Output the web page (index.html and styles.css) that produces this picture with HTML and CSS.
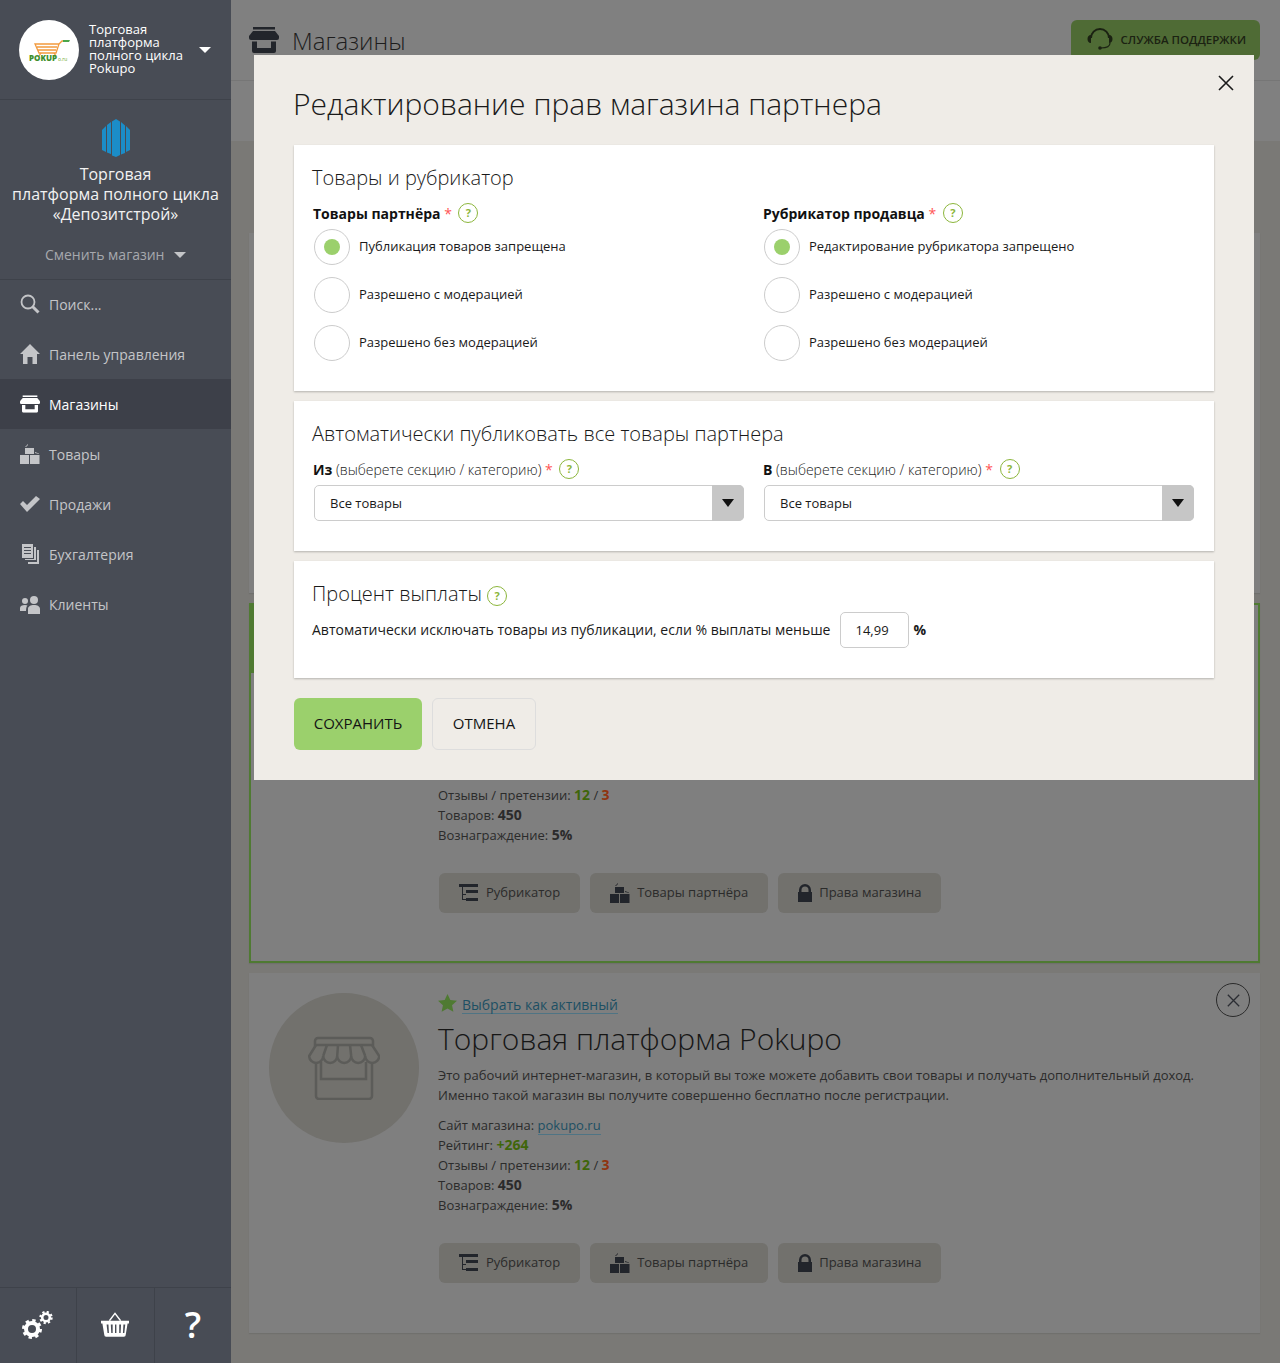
FILE: index.html
```html
<!DOCTYPE html>
<html lang="ru">
<head>
    <meta charset="UTF-8">
    <meta name="viewport" content="width=device-width, initial-scale=1.0">
    <title>Магазины</title>
    <link rel="stylesheet" href="styles.css">
</head>
<body>

<svg class="sprite" xmlns="http://www.w3.org/2000/svg">
    <symbol id="i-store" viewBox="0 0 30 26">
        <path d="M4 0h22v2.500H4z"/>
        <path d="M4 4h22l4 5v2a2 2 0 0 1-2 2H2a2 2 0 0 1-2-2V9z"/>
        <path fill-rule="evenodd" d="M3 14.500h24V24a2 2 0 0 1-2 2H5a2 2 0 0 1-2-2zM8 14.500V21h14v-6.500z"/>
    </symbol>
    <symbol id="i-boxes" viewBox="0 0 20 20">
        <path d="M0 11h9v9H0zM10 11h9.500v9H10zM5 4h9v6H5z"/>
        <path d="M5 3l3-3v1L6 3zM15 8l4 1.500V10l-4-1z"/>
    </symbol>
    <symbol id="i-list" viewBox="0 0 20 18">
        <path d="M0 0h19v3H0zM7 6h12v3H7zM7 14h12v3H7z"/>
        <path d="M3 3h1v12h3v1H3z"/>
        <path d="M4 10h3v1H4z"/>
    </symbol>
    <symbol id="i-lock" viewBox="0 0 14 18">
        <path fill-rule="evenodd" d="M1 8V6a6 6 0 0 1 12 0v2h1v10H0V8zm2.500 0h7V6a3.500 3.500 0 0 0-7 0z"/>
    </symbol>
    <symbol id="i-star" viewBox="0 0 20 19">
        <path d="M10 0l3 6.400 7 .8-5.200 4.700 1.400 6.900L10 15.400l-6.200 3.400 1.400-6.900L0 7.200l7-.8z"/>
    </symbol>
    <symbol id="i-close" viewBox="0 0 16 16">
        <path d="M1 1l14 14M15 1L1 15" fill="none" stroke="currentColor" stroke-width="1.600"/>
    </symbol>
    <symbol id="i-bigstore" viewBox="0 0 72 64">
        <g fill="none" stroke="#5c5c59" stroke-width="2.500">
            <path d="M7 9V5a3 3 0 0 1 3-3h52a3 3 0 0 1 3 3v4z"/>
            <path d="M8 9L1.200 20a7 7 0 0 0 14 0a7 7 0 0 0 14 0a7 7 0 0 0 14 0a7 7 0 0 0 14 0a7 7 0 0 0 14 0L64 9"/>
            <path d="M15.200 20L19 9M29.200 20L30 9M43.200 20L42 9M57.200 20L53 9"/>
            <path d="M8 27v33a3 3 0 0 0 3 3h50a3 3 0 0 0 3-3V27"/>
            <path d="M13 26v17h45V26"/>
        </g>
    </symbol>
</svg>

<div class="page">

    <aside class="sidebar">
        <div class="account">
            <div class="account-logo">
                <svg width="42" height="26" viewBox="0 0 42 26">
                    <g fill="none" stroke="#f29a3e" stroke-width="1.300">
                        <path d="M7 7h24l-3 9H11zM9 10h20M10 13h18M31 7l3-3h2"/>
                        <path d="M13 16l-2 3M26 16l2 3"/>
                    </g>
                    <path d="M35 3h7l-1 2h-6z" fill="#4ba64a"/>
                    <text x="1" y="24" class="logo-word">POKUP</text>
                    <text x="30" y="24" class="logo-tail">o.ru</text>
                </svg>
            </div>
            <div class="account-name">Торговая платформа полного цикла Pokupo</div>
            <span class="caret caret-white"></span>
        </div>

        <div class="shop">
            <svg class="shop-logo" width="28" height="38" viewBox="0 0 28 38">
                <path fill="#1b8dc8" d="M0 11l4-4v26l-4-2zM5 6l4-3v32l-4-1.500zM10 2.500L14 0l4 2.500V36l-4 2-4-1.500zM19 3l4 3.500V34l-4 1.500zM24 7l4 4v20l-4 2z"/>
            </svg>
            <div class="shop-name">Торговая<br>платформа полного цикла<br>«Депозитстрой»</div>
            <div class="shop-switch">Сменить магазин <span class="caret caret-grey"></span></div>
        </div>

        <nav class="nav">
            <a class="nav-item">
                <svg class="nav-icon" viewBox="0 0 20 20"><circle cx="8" cy="8" r="6.500" fill="none" stroke="currentColor" stroke-width="1.800"/><path d="M12.500 12.500l6 6" stroke="currentColor" stroke-width="3"/></svg>
                Поиск...
            </a>
            <a class="nav-item">
                <svg class="nav-icon" viewBox="0 0 20 20"><path d="M10 0l10 10h-3v10h-4.500v-7h-5v7H3V10H0z"/></svg>
                Панель управления
            </a>
            <a class="nav-item nav-item-active">
                <svg class="nav-icon" viewBox="0 0 30 26"><use href="#i-store"/></svg>
                Магазины
            </a>
            <a class="nav-item">
                <svg class="nav-icon" viewBox="0 0 20 20"><use href="#i-boxes"/></svg>
                Товары
            </a>
            <a class="nav-item">
                <svg class="nav-icon" viewBox="0 0 20 20"><path d="M0 10l3-3 4 4 9-9 4 3-13 13z"/></svg>
                Продажи
            </a>
            <a class="nav-item">
                <svg class="nav-icon" viewBox="0 0 20 20"><path fill-rule="evenodd" d="M2 0h11v14H2zM4 3v1h7V3zM4 6v1h7V6zM4 9v1h7V9z"/><path d="M14 3h2v13H5v-1h9zM17 6h2v14H8v-2h9z"/></svg>
                Бухгалтерия
            </a>
            <a class="nav-item">
                <svg class="nav-icon" viewBox="0 0 20 20"><circle cx="5" cy="7" r="3"/><circle cx="14" cy="6" r="4"/><path d="M0 17v-3c0-2 2-3 5-3 1 0 2 .2 2.500.5C6.500 12.500 6 14 6 17zM8 20v-5c0-2.500 2.500-4 6-4s6 1.500 6 4v5z"/></svg>
                Клиенты
            </a>
        </nav>

        <div class="side-tools">
            <div class="side-tool">
                <svg class="gears" width="32" height="28" viewBox="0 0 32 28">
                    <circle cx="10" cy="18" r="6" fill="none" stroke="#fff" stroke-width="4"/>
                    <circle cx="10" cy="18" r="8.500" fill="none" stroke="#fff" stroke-width="3" stroke-dasharray="3.300 3.370"/>
                    <circle cx="24" cy="6.500" r="3.800" fill="none" stroke="#fff" stroke-width="2.600"/>
                    <circle cx="24" cy="6.500" r="5.600" fill="none" stroke="#fff" stroke-width="2.200" stroke-dasharray="2.200 2.200"/>
                </svg>
            </div>
            <div class="side-tool">
                <svg width="28" height="25" viewBox="0 0 30 26">
                    <path d="M9 9l6-8 6 8" fill="none" stroke="#fff" stroke-width="1.500"/>
                    <path fill-rule="evenodd" d="M0 9h30v3h-1.500l-2 12a2 2 0 0 1-2 2h-19a2 2 0 0 1-2-2L1.500 12H0zM6 13l1 9h1.500l-.5-9zM10.500 13l.5 9h1.500v-9zM15 13v9h1.500v-9zM19.500 13v9H21l.5-9zM24 13l-.5 9H25l1-9z"/>
                </svg>
            </div>
            <div class="side-tool side-tool-help">?</div>
        </div>
    </aside>

    <main class="content">
        <header class="topbar">
            <svg class="topbar-icon" viewBox="0 0 30 26"><use href="#i-store"/></svg>
            <span class="topbar-title">Магазины</span>
            <a class="support">
                <svg width="26" height="22" viewBox="0 0 26 22">
                    <path d="M4 10a9 9 0 0 1 18 0" fill="none" stroke="currentColor" stroke-width="2"/>
                    <path d="M4 7v8C1.500 15 .5 13 .5 11S1.500 7 4 7zM22 7v8c2.500 0 3.500-2 3.500-4S24.500 7 22 7z"/>
                    <path d="M23 15c0 3-3 5-9 5" fill="none" stroke="currentColor" stroke-width="1.200"/>
                    <circle cx="13" cy="20" r="1.800"/>
                </svg>
                Служба поддержки
            </a>
        </header>
        <div class="topband"></div>

        <div class="cards">
            <section class="card"></section>

            <section class="card card-active">
                <div class="card-thumb">
                    <svg width="72" height="64" viewBox="0 0 72 64"><use href="#i-bigstore"/></svg>
                </div>
                <div class="card-body">
                    <div class="card-pick">
                        <svg class="card-star" viewBox="0 0 20 19"><use href="#i-star"/></svg>
                        <a class="link">Выбрать как активный</a>
                    </div>
                    <h3 class="card-title">Торговая платформа Pokupo</h3>
                    <p class="card-desc">Это рабочий интернет-магазин, в который вы тоже можете добавить свои товары и получать дополнительный доход.<br>Именно такой магазин вы получите совершенно бесплатно после регистрации.</p>
                    <ul class="card-facts">
                        <li>Сайт магазина: <a class="link">pokupo.ru</a></li>
                        <li>Рейтинг: <b class="good">+264</b></li>
                        <li>Отзывы / претензии: <b class="good">12</b> / <b class="bad">3</b></li>
                        <li>Товаров: <b>450</b></li>
                        <li>Вознаграждение: <b>5%</b></li>
                    </ul>
                    <div class="card-actions">
                        <a class="card-btn"><svg class="btn-icon" viewBox="0 0 20 18"><use href="#i-list"/></svg>Рубрикатор</a>
                        <a class="card-btn"><svg class="btn-icon" viewBox="0 0 20 20"><use href="#i-boxes"/></svg>Товары партнёра</a>
                        <a class="card-btn"><svg class="btn-icon btn-icon-lock" viewBox="0 0 14 18"><use href="#i-lock"/></svg>Права магазина</a>
                    </div>
                </div>
            </section>

            <section class="card">
                <div class="card-thumb">
                    <svg width="72" height="64" viewBox="0 0 72 64"><use href="#i-bigstore"/></svg>
                </div>
                <div class="card-body">
                    <div class="card-pick">
                        <svg class="card-star" viewBox="0 0 20 19"><use href="#i-star"/></svg>
                        <a class="link">Выбрать как активный</a>
                    </div>
                    <h3 class="card-title">Торговая платформа Pokupo</h3>
                    <p class="card-desc">Это рабочий интернет-магазин, в который вы тоже можете добавить свои товары и получать дополнительный доход.<br>Именно такой магазин вы получите совершенно бесплатно после регистрации.</p>
                    <ul class="card-facts">
                        <li>Сайт магазина: <a class="link">pokupo.ru</a></li>
                        <li>Рейтинг: <b class="good">+264</b></li>
                        <li>Отзывы / претензии: <b class="good">12</b> / <b class="bad">3</b></li>
                        <li>Товаров: <b>450</b></li>
                        <li>Вознаграждение: <b>5%</b></li>
                    </ul>
                    <div class="card-actions">
                        <a class="card-btn"><svg class="btn-icon" viewBox="0 0 20 18"><use href="#i-list"/></svg>Рубрикатор</a>
                        <a class="card-btn"><svg class="btn-icon" viewBox="0 0 20 20"><use href="#i-boxes"/></svg>Товары партнёра</a>
                        <a class="card-btn"><svg class="btn-icon btn-icon-lock" viewBox="0 0 14 18"><use href="#i-lock"/></svg>Права магазина</a>
                    </div>
                </div>
                <a class="card-remove"><svg viewBox="0 0 16 16"><use href="#i-close"/></svg></a>
            </section>
        </div>
    </main>

    <div class="modal">
        <a class="modal-close"><svg viewBox="0 0 16 16"><use href="#i-close"/></svg></a>
        <h1 class="modal-title">Редактирование прав магазина партнера</h1>

        <section class="panel">
            <h2 class="panel-title">Товары и рубрикатор</h2>
            <div class="two-cols">
                <div>
                    <div class="field-label"><b>Товары партнёра</b> <span class="req">*</span> <span class="help">?</span></div>
                    <div class="radios">
                        <label class="radio"><span class="radio-dot radio-dot-on"></span>Публикация товаров запрещена</label>
                        <label class="radio"><span class="radio-dot"></span>Разрешено с модерацией</label>
                        <label class="radio"><span class="radio-dot"></span>Разрешено без модерацией</label>
                    </div>
                </div>
                <div>
                    <div class="field-label"><b>Рубрикатор продавца</b> <span class="req">*</span> <span class="help">?</span></div>
                    <div class="radios">
                        <label class="radio"><span class="radio-dot radio-dot-on"></span>Редактирование рубрикатора запрещено</label>
                        <label class="radio"><span class="radio-dot"></span>Разрешено с модерацией</label>
                        <label class="radio"><span class="radio-dot"></span>Разрешено без модерацией</label>
                    </div>
                </div>
            </div>
        </section>

        <section class="panel">
            <h2 class="panel-title">Автоматически публиковать все товары партнера</h2>
            <div class="two-cols">
                <div>
                    <div class="field-label"><b>Из</b> (выберете секцию / категорию) <span class="req">*</span> <span class="help">?</span></div>
                    <div class="dropdown">Все товары<span class="dropdown-arrow"></span></div>
                </div>
                <div>
                    <div class="field-label"><b>В</b> (выберете секцию / категорию) <span class="req">*</span> <span class="help">?</span></div>
                    <div class="dropdown">Все товары<span class="dropdown-arrow"></span></div>
                </div>
            </div>
        </section>

        <section class="panel">
            <h2 class="panel-title">Процент выплаты <span class="help help-title">?</span></h2>
            <div class="percent-row">
                <span class="percent-text">Автоматически исключать товары из публикации, если % выплаты меньше</span>
                <div class="percent-input">14,99</div>
                <b class="percent-text">%</b>
            </div>
        </section>

        <div class="modal-actions">
            <button class="btn btn-save">Сохранить</button>
            <button class="btn btn-cancel">Отмена</button>
        </div>
    </div>

</div>

</body>
</html>
```

FILE: styles.css
```css
/* base */
* {
    box-sizing: border-box;
}

body {
    margin: 0;
    font-family: "Open Sans", "Liberation Sans", sans-serif;
    font-size: 13px;
    color: #2b2b2b;
    background-color: #7a7976;
}

a {
    text-decoration: none;
}

ul {
    list-style: none;
    margin: 0;
    padding: 0;
}

.sprite {
    position: absolute;
    width: 0;
    height: 0;
}

.page {
    position: relative;
    display: flex;
    width: 1280px;
    height: 1363px;
    overflow: hidden;
}

/* sidebar */
.sidebar {
    display: flex;
    flex-direction: column;
    flex: 0 0 231px;
    background-color: #484c55;
    color: #c4c5c8;
}

.account {
    display: flex;
    align-items: center;
    height: 100px;
    padding-left: 19px;
    border-bottom: 1px solid #3e424a;
}

.account-logo {
    display: flex;
    align-items: center;
    justify-content: center;
    width: 60px;
    height: 60px;
    border-radius: 50%;
    background-color: #fff;
}

.logo-word {
    font-size: 8px;
    font-weight: 800;
    fill: #3f8f2c;
}

.logo-tail {
    font-size: 5px;
    fill: #6eaa2e;
}

.account-name {
    width: 100px;
    margin-top: -1px;
    margin-left: 10px;
    font-size: 13px;
    line-height: 13px;
    color: #fff;
}

.caret {
    display: inline-block;
    border-left: 6px solid transparent;
    border-right: 6px solid transparent;
    border-top: 6px solid #fff;
}

.caret-white {
    margin-left: 10px;
}

.caret-grey {
    border-top-color: #c4c5c8;
    margin-left: 6px;
    vertical-align: 2px;
}

.shop {
    height: 180px;
    padding-top: 19px;
    text-align: center;
    border-bottom: 1px solid #3e424a;
}

.shop-logo {
    display: block;
    margin: 0 auto 7px;
}

.shop-name {
    font-size: 16px;
    line-height: 20px;
    color: #f2f2f2;
}

.shop-switch {
    margin-top: 20px;
    font-size: 14px;
    line-height: 22px;
    color: #a6a8ad;
}

.nav {
    flex: 1;
    margin-top: -1px;
}

.nav-item {
    display: flex;
    align-items: center;
    gap: 9px;
    height: 50px;
    padding-left: 20px;
    font-size: 14px;
    color: #c4c5c8;
}

.nav-item-active {
    background-color: #3d4049;
    color: #fff;
}

.nav-icon {
    flex: none;
    width: 20px;
    height: 20px;
    fill: currentColor;
}

.side-tools {
    display: flex;
    height: 76px;
    border-top: 1px solid #3e424a;
}

.side-tool {
    display: flex;
    align-items: center;
    justify-content: center;
    flex: 1;
    padding-bottom: 2px;
    fill: #fff;
    border-left: 1px solid #3e424a;
}

.side-tool:first-child {
    border-left: 0;
}

.gears {
    margin-top: 1px;
}

.side-tool-help {
    font-size: 36px;
    font-weight: 600;
    color: #fff;
}

/* page behind the dialog */
.content {
    flex: 1;
    min-width: 0;
}

.topbar {
    display: flex;
    align-items: center;
    height: 81px;
    padding: 0 20px 0 18px;
    background-color: #808080;
    border-bottom: 1px solid #767676;
}

.topbar-icon {
    width: 30px;
    height: 26px;
    fill: #22252b;
}

.topbar-title {
    margin-left: 13px;
    font-size: 24px;
    font-weight: 300;
    color: #1d1d1d;
}

.support {
    display: flex;
    align-items: center;
    gap: 8px;
    align-self: flex-start;
    height: 40px;
    margin: 20px 0 0 auto;
    padding: 0 14px 2px 16px;
    border-radius: 6px;
    background-color: #4f6b35;
    font-size: 11.500px;
    font-weight: 600;
    text-transform: uppercase;
    color: #1b2212;
    fill: #1b2212;
}

.topband {
    height: 60px;
    background-color: #808080;
}

.cards {
    display: flex;
    flex-direction: column;
    gap: 10px;
    padding: 92px 20px 0 18px;
}

.card {
    position: relative;
    display: flex;
    height: 360px;
    padding: 20px;
    background-color: #7f7f7f;
    box-shadow: 0 1px 1px #70706d;
}

.card-active {
    padding: 18px;
    border: 2px solid #4f7a32;
}

.card-active::before {
    content: "";
    position: absolute;
    left: 0;
    top: 0;
    width: 4px;
    height: 68px;
    background-color: #4f7a32;
}

.card-thumb {
    display: flex;
    align-items: center;
    justify-content: center;
    flex: none;
    width: 150px;
    height: 150px;
    border-radius: 50%;
    background-color: #72716d;
}

.card-body {
    margin-left: 19px;
}

.card-pick {
    display: flex;
    align-items: center;
    gap: 5px;
    height: 22px;
    margin-top: 1px;
    font-size: 14px;
}

.card-star {
    width: 19px;
    height: 18px;
    margin-top: -4px;
    fill: #4f7a32;
}

.link {
    color: #1d4f63;
    border-bottom: 1px solid #4f7484;
    line-height: 16px;
}

.card-title {
    margin: 1px 0 0;
    font-size: 30px;
    font-weight: 300;
    line-height: 44px;
    color: #161616;
}

.card-desc {
    margin: 4px 0 0;
    line-height: 20px;
}

.card-facts {
    margin-top: 10px;
    line-height: 20px;
}

.card-facts b {
    font-size: 14px;
}

.good {
    color: #3f660a;
}

.bad {
    color: #8f3410;
}

.card-actions {
    display: flex;
    gap: 10px;
    margin-top: 28px;
    margin-left: 1px;
}

.card-btn {
    display: flex;
    align-items: center;
    gap: 7px;
    height: 40px;
    padding: 0 20px 2px;
    border-radius: 6px;
    background-color: #72716d;
    color: #2b2b2b;
}

.btn-icon {
    width: 20px;
    height: 20px;
    margin-top: 2px;
    fill: #22252b;
}

.btn-icon-lock {
    width: 14px;
    height: 18px;
}

.card-remove {
    position: absolute;
    top: 10px;
    right: 10px;
    display: flex;
    align-items: center;
    justify-content: center;
    width: 34px;
    height: 34px;
    border: 1px solid #2b2b2b;
    border-radius: 50%;
    color: #2b2d33;
}

.card-remove svg {
    width: 13px;
    height: 13px;
}

/* dialog */
.modal {
    position: absolute;
    left: 254px;
    top: 55px;
    width: 1000px;
    height: 725px;
    padding: 28px 40px 30px;
    background-color: #efece7;
    color: #1a1a1a;
}

.modal-close {
    position: absolute;
    top: 20px;
    right: 20px;
    width: 16px;
    height: 16px;
    color: #1a1a1a;
}

.modal-title {
    margin: -1px 0 19px -1px;
    font-size: 30px;
    font-weight: 300;
    line-height: 44px;
}

.panel {
    margin-bottom: 10px;
    padding: 18px 18px 30px;
    background-color: #fff;
    box-shadow: 0 1px 2px rgba(0, 0, 0, 0.25);
}

.panel-title {
    margin: 0;
    font-size: 20px;
    font-weight: 300;
    line-height: 30px;
}

.two-cols {
    display: grid;
    grid-template-columns: 450px 1fr;
    margin-top: 9px;
}

.field-label {
    height: 22px;
    padding-left: 1px;
    font-size: 14px;
    font-weight: 300;
    line-height: 24px;
    color: #222;
}

.field-label b {
    font-weight: 700;
    color: #111;
}

.req {
    font-weight: 400;
    color: #f55;
}

.help {
    display: inline-flex;
    align-items: center;
    justify-content: center;
    width: 20px;
    height: 20px;
    margin-left: 3px;
    border: 1.500px solid #8cb63c;
    border-radius: 50%;
    font-size: 11px;
    font-weight: 700;
    line-height: 1;
    color: #8cb63c;
    vertical-align: 2px;
}

.help-title {
    margin-left: 0;
    vertical-align: 1px;
}

.radios {
    display: flex;
    flex-direction: column;
    gap: 12px;
    margin: 5px 0 0 2px;
}

.radio {
    display: flex;
    align-items: flex-start;
    gap: 9px;
    height: 36px;
    line-height: 34px;
}

.radio-dot {
    display: flex;
    align-items: center;
    justify-content: center;
    width: 36px;
    height: 36px;
    border: 1px solid #ccc;
    border-radius: 50%;
}

.radio-dot-on::after {
    content: "";
    width: 16px;
    height: 16px;
    border-radius: 50%;
    background-color: #9bd06c;
}

.dropdown {
    position: relative;
    display: flex;
    align-items: center;
    width: 430px;
    height: 36px;
    margin: 5px 0 0 2px;
    padding-left: 15px;
    border: 1px solid #ccc;
    border-radius: 5px;
}

.dropdown-arrow {
    position: absolute;
    top: -1px;
    right: -1px;
    bottom: -1px;
    width: 32px;
    display: flex;
    align-items: center;
    justify-content: center;
    background-color: #c6c6c6;
    border-radius: 0 5px 5px 0;
}

.dropdown-arrow::after {
    content: "";
    border-left: 6px solid transparent;
    border-right: 6px solid transparent;
    border-top: 8px solid #111;
}

.percent-row {
    display: flex;
    align-items: center;
    height: 36px;
    margin-top: 3px;
    font-size: 14px;
}

.percent-text {
    margin-top: -2px;
}

.percent-input {
    display: flex;
    align-items: center;
    width: 69px;
    height: 36px;
    margin: 0 5px 0 9px;
    padding-left: 15px;
    border: 1px solid #ccc;
    border-radius: 5px;
    font-size: 13px;
}

.modal-actions {
    display: flex;
    gap: 10px;
    margin-top: 20px;
}

.btn {
    height: 52px;
    padding: 0 0 2px;
    border-radius: 6px;
    font-family: inherit;
    font-size: 15px;
    font-weight: 500;
    text-transform: uppercase;
    color: #141414;
}

.btn-save {
    width: 128px;
    border: 0;
    background-color: #9bd06c;
}

.btn-cancel {
    width: 104px;
    border: 1px solid #ddd;
    background-color: #efece7;
}
```
